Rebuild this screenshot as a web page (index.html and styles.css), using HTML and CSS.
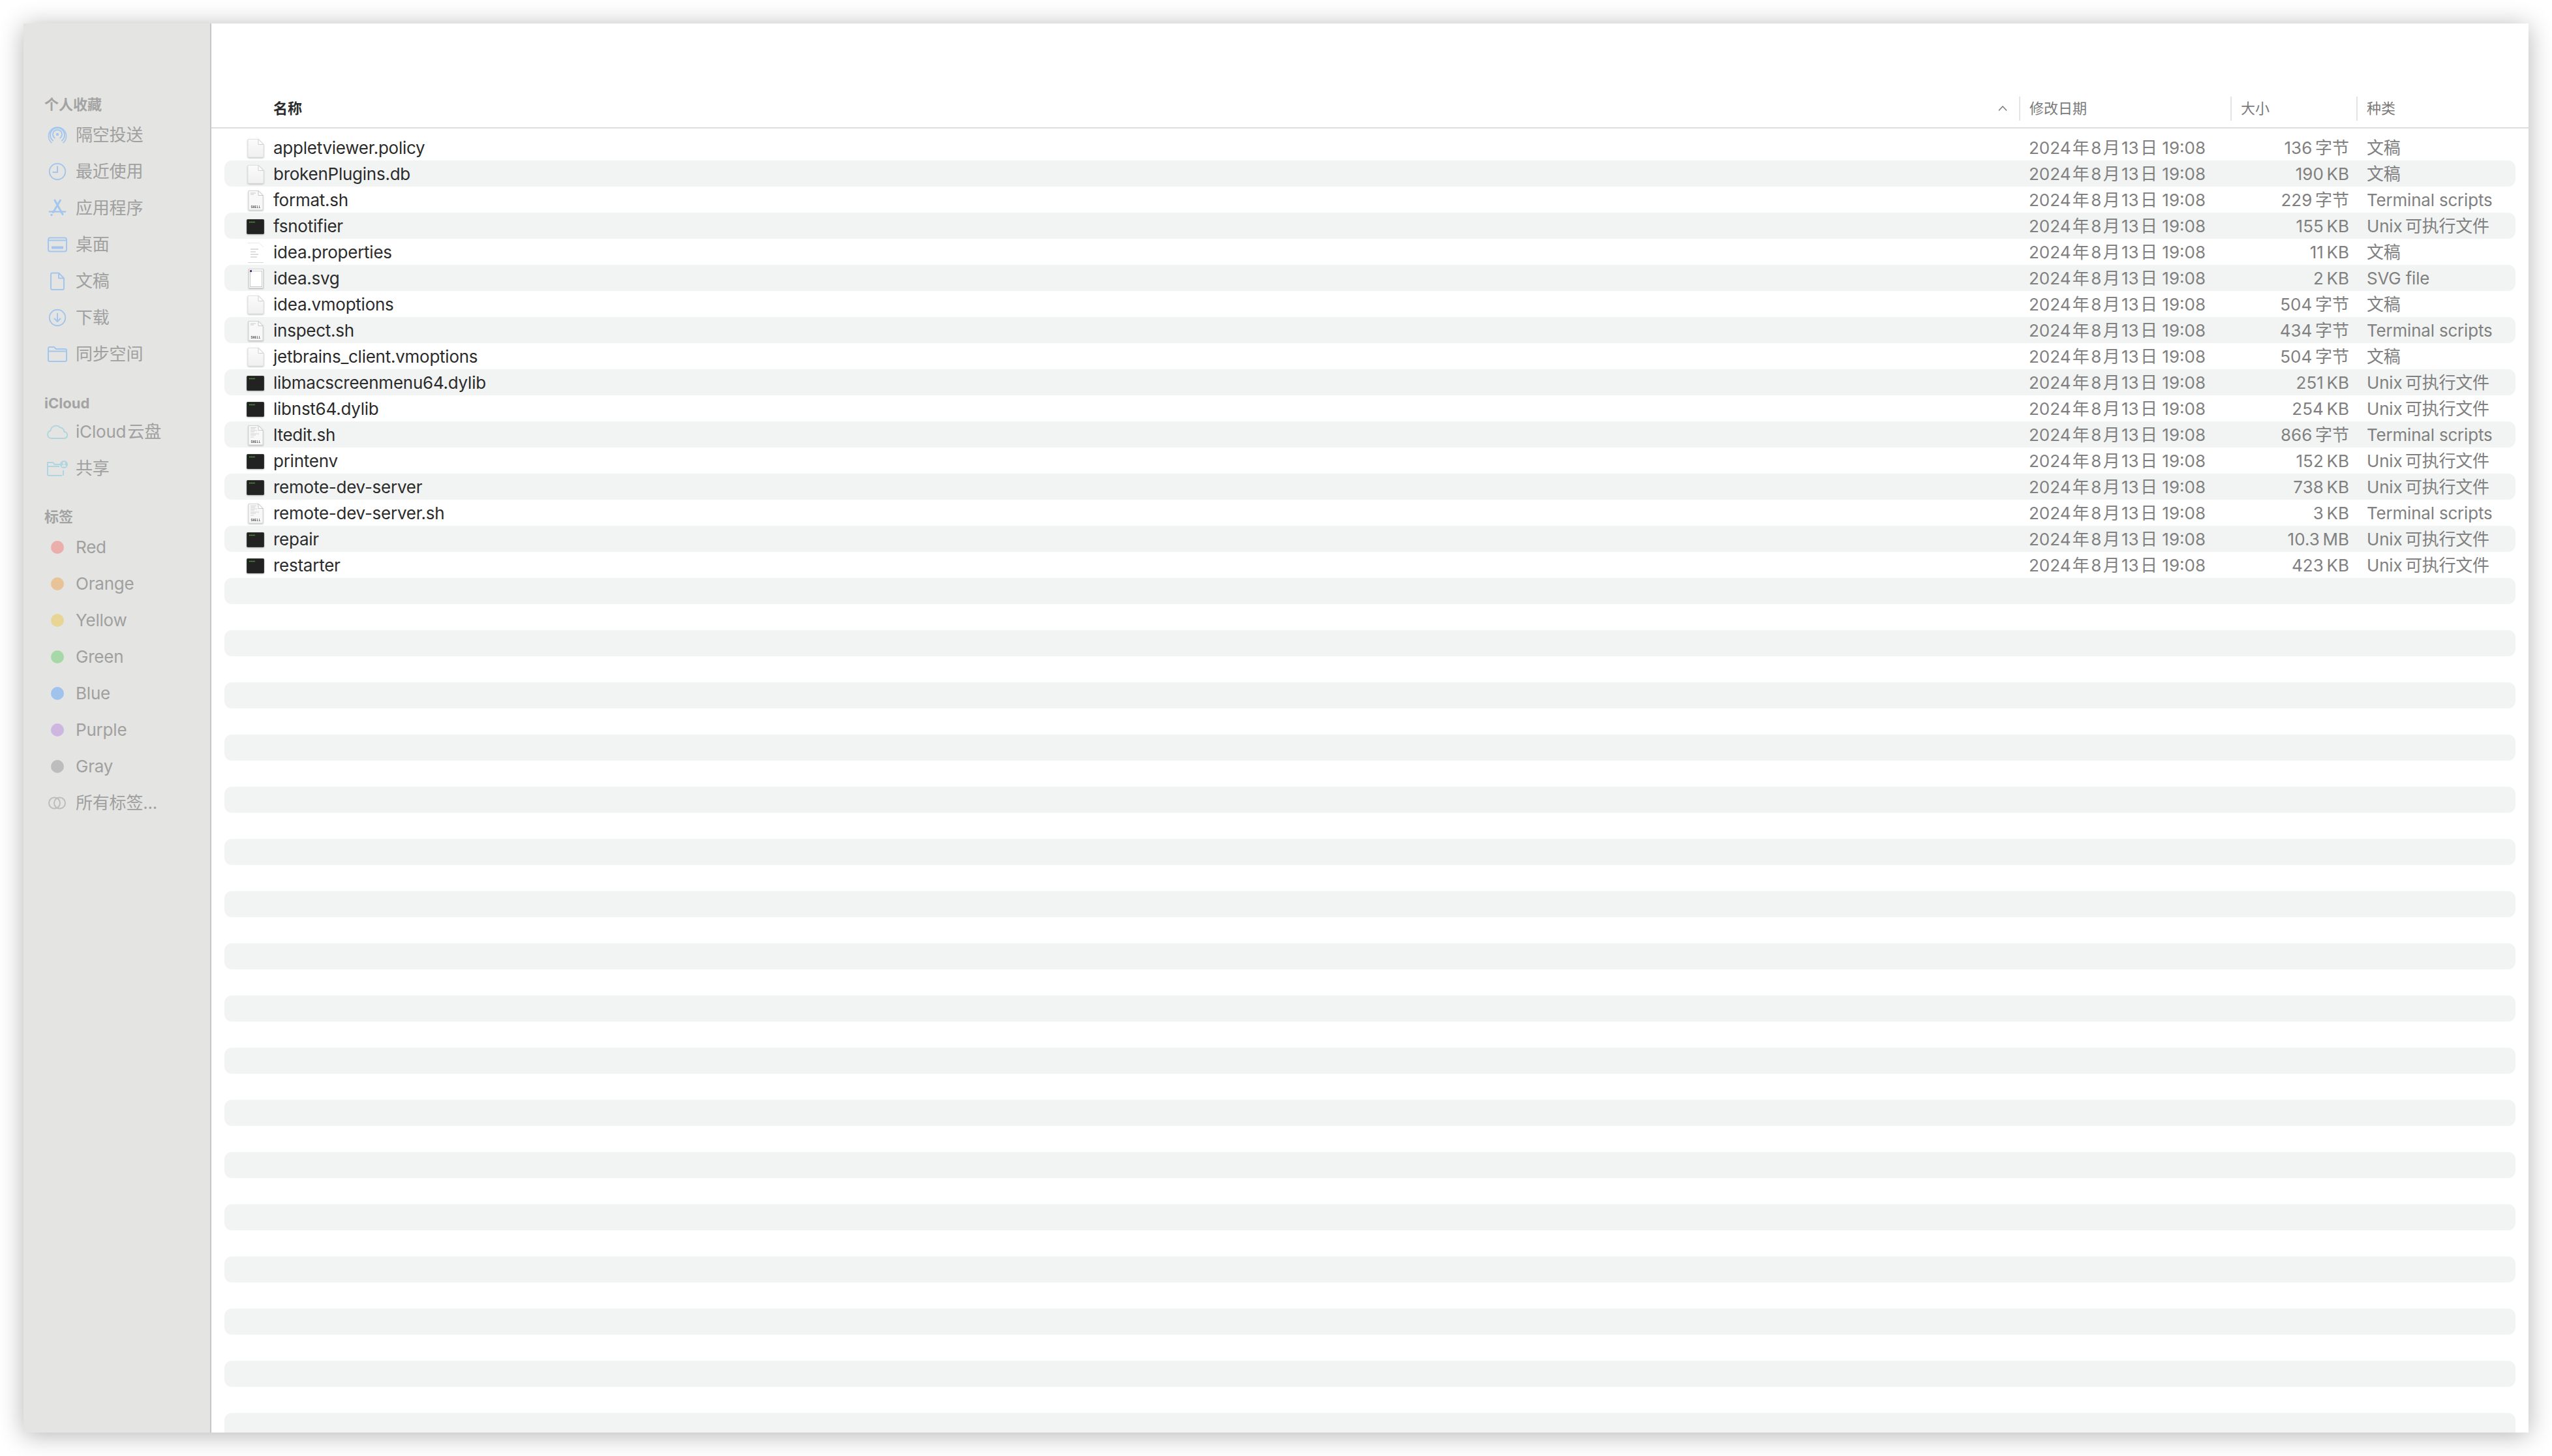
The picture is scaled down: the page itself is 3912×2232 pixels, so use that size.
FILE: index.html
```html
<!DOCTYPE html>
<html lang="en">
<head>
  <meta charset="UTF-8">
  <meta name="viewport" content="width=device-width, initial-scale=1.0">
  <title>Finder</title>
  <link rel="stylesheet" href="styles.css">
</head>
<body>
  <svg class="defs" width="0" height="0">
    <defs>
      <linearGradient id="pageFill" x1="0" y1="0" x2="0" y2="1">
        <stop offset="0" stop-color="#fbfbfb"/>
        <stop offset="1" stop-color="#f0f0f0"/>
      </linearGradient>
      <symbol id="fileDoc" viewBox="0 0 40 40">
        <path d="M8 6.500H24L32 14.500V33a1 1 0 0 1-1 1H9a1 1 0 0 1-1-1V7.500a1 1 0 0 1 1-1Z" fill="url(#pageFill)" stroke="#e2e2e2"/>
        <path d="M24 6.500V14.500H32Z" fill="#fff" stroke="#d0d0d0"/>
      </symbol>
      <symbol id="fileShell" viewBox="0 0 40 40">
        <path d="M9 5.500H24L31 12.500V35H9Z" fill="#f8f8f8" stroke="#d4d4d4"/>
        <path d="M24 5.500V12.500H31Z" fill="#fff" stroke="#c8c8c8"/>
        <path d="M12 9H20M12 11H17" stroke="#cccccc"/>
        <text x="20" y="32" class="shell-label">SHELL</text>
      </symbol>
      <symbol id="fileShellLong" viewBox="0 0 40 40">
        <path d="M9 5.500H24L31 12.500V35H9Z" fill="#f8f8f8" stroke="#d4d4d4"/>
        <path d="M24 5.500V12.500H31Z" fill="#fff" stroke="#c8c8c8"/>
        <path d="M12 8.500H21M12 10.500H19M12 13H22M12 15H18M12 18H25M12 20H20M12 23H17" stroke="#c8c8c8" stroke-width=".8"/>
        <text x="20" y="32" class="shell-label">SHELL</text>
      </symbol>
      <symbol id="fileTerm" viewBox="0 0 40 40">
        <rect x="6.500" y="9.500" width="26" height="22" rx="1" fill="#222" stroke="#3a3a3a"/>
        <path d="M10 13.500H19" stroke="#4fa63f" stroke-width="1.500" stroke-dasharray="2 .6"/>
      </symbol>
      <symbol id="fileText" viewBox="0 0 40 40">
        <path d="M8 5.500H25L32 12" fill="none" stroke="#e8e8e8"/>
        <path d="M8 35.500H32" stroke="#d8d8d8"/>
        <path d="M12 15H24M12 19H20M12 23H24M12 27H22" stroke="#bcbcbc" stroke-width="1.200"/>
      </symbol>
      <symbol id="fileSvg" viewBox="0 0 40 40">
        <rect x="9.500" y="5.500" width="22" height="29" fill="#fff" stroke="#d0d0d0"/>
        <rect x="11.500" y="8.500" width="18" height="24" fill="#fff" stroke="#c8c8c8"/>
        <rect x="11" y="7" width="3" height="3" fill="#27408f"/>
        <rect x="11" y="7" width="1.500" height="1.500" fill="#c8321f"/>
      </symbol>
    </defs>
  </svg>

  <div class="window">
    <aside class="sidebar">
      <div class="side-label">个人收藏</div>
      <div class="side-item">
        <svg class="side-icon" viewBox="0 0 34 34" fill="none" stroke="#a5c6ec" stroke-width="2" stroke-linecap="round">
          <circle cx="17" cy="16" r="2.200" fill="#a5c6ec" stroke="none"/>
          <path d="M12.800 21.500a7 7 0 1 1 8.400 0"/><path d="M10 25.500a11 11 0 1 1 14 0"/><path d="M8 28.800a13.600 13.600 0 1 1 18 0" stroke-width="1.600"/>
        </svg>
        <span>隔空投送</span>
      </div>
      <div class="side-item">
        <svg class="side-icon" viewBox="0 0 34 34" fill="none" stroke="#a5c6ec" stroke-width="2">
          <circle cx="17" cy="17" r="12.200"/><path d="M17 8.500V18H9.500"/>
        </svg>
        <span>最近使用</span>
      </div>
      <div class="side-item">
        <svg class="side-icon" viewBox="0 0 34 34" fill="none" stroke="#a5c6ec" stroke-width="3" stroke-linecap="round">
          <path d="M13 5L25 26.500M21.500 5L10.500 23.500"/><path d="M5 22.500H29" stroke-width="2.600"/><path d="M8 27.500h.1" stroke-width="3.400"/>
        </svg>
        <span>应用程序</span>
      </div>
      <div class="side-item">
        <svg class="side-icon" viewBox="0 0 34 34" fill="none" stroke="#a5c6ec" stroke-width="2">
          <rect x="3" y="6.500" width="28" height="21" rx="3"/><path d="M3 10.500H31"/><rect x="8" y="19.500" width="18" height="4" fill="#a5c6ec" stroke="none"/>
        </svg>
        <span>桌面</span>
      </div>
      <div class="side-item">
        <svg class="side-icon" viewBox="0 0 34 34" fill="none" stroke="#a5c6ec" stroke-width="2" stroke-linejoin="round">
          <path d="M9 4.500H19L27 12.500V28a2 2 0 0 1-2 2H9a2 2 0 0 1-2-2V6.500a2 2 0 0 1 2-2Z"/><path d="M19 4.500V12.500H27"/>
        </svg>
        <span>文稿</span>
      </div>
      <div class="side-item">
        <svg class="side-icon" viewBox="0 0 34 34" fill="none" stroke="#a5c6ec" stroke-width="2" stroke-linecap="round" stroke-linejoin="round">
          <circle cx="17" cy="17" r="12.200"/><path d="M17 10.500V22.500M12.500 18.500L17 23L21.500 18.500"/>
        </svg>
        <span>下载</span>
      </div>
      <div class="side-item">
        <svg class="side-icon" viewBox="0 0 34 34" fill="none" stroke="#a5c6ec" stroke-width="2" stroke-linejoin="round">
          <path d="M3 8a2 2 0 0 1 2-2h7l3 3h14a2 2 0 0 1 2 2v15a2 2 0 0 1-2 2H5a2 2 0 0 1-2-2Z"/><path d="M3 12.500H31"/>
        </svg>
        <span>同步空间</span>
      </div>

      <div class="side-label side-label-cloud">iCloud</div>
      <div class="side-item">
        <svg class="side-icon" viewBox="0 0 34 34" fill="none" stroke="#afd5e0" stroke-width="2" stroke-linejoin="round">
          <path d="M8 27a6 6 0 0 1-1.500-11.800a8.500 8.500 0 0 1 14.500-5a7 7 0 0 1 6.500 6.800a5 5 0 0 1-.5 10Z"/>
        </svg>
        <span>iCloud&hairsp;云盘</span>
      </div>
      <div class="side-item">
        <svg class="side-icon" viewBox="0 0 34 34" fill="none" stroke="#afd5e0" stroke-width="2" stroke-linejoin="round">
          <path d="M24 28H4a2 2 0 0 1-2-2V8h8l3 3h9M2 14H20M26 28V20"/>
          <circle cx="27" cy="11" r="6" fill="#afd5e0" stroke="none"/><circle cx="27" cy="9" r="2" fill="#e4e4e2" stroke="none"/><path d="M23.500 14.500a3.500 3 0 0 1 7 0Z" fill="#e4e4e2" stroke="none"/>
        </svg>
        <span>共享</span>
      </div>

      <div class="side-label side-label-tags">标签</div>
      <div class="side-item"><span class="side-icon"><i class="dot dot-red"></i></span><span>Red</span></div>
      <div class="side-item"><span class="side-icon"><i class="dot dot-orange"></i></span><span>Orange</span></div>
      <div class="side-item"><span class="side-icon"><i class="dot dot-yellow"></i></span><span>Yellow</span></div>
      <div class="side-item"><span class="side-icon"><i class="dot dot-green"></i></span><span>Green</span></div>
      <div class="side-item"><span class="side-icon"><i class="dot dot-blue"></i></span><span>Blue</span></div>
      <div class="side-item"><span class="side-icon"><i class="dot dot-purple"></i></span><span>Purple</span></div>
      <div class="side-item"><span class="side-icon"><i class="dot dot-gray"></i></span><span>Gray</span></div>
      <div class="side-item">
        <svg class="side-icon" viewBox="0 0 34 34" fill="none" stroke="#bdbdbd" stroke-width="2">
          <circle cx="12.500" cy="17" r="8.500"/><circle cx="20.500" cy="17" r="8.500"/>
        </svg>
        <span>所有标签...</span>
      </div>
    </aside>

    <main class="main">
      <div class="titlebar"></div>
      <div class="cols">
        <div class="col col-name">名称</div>
        <svg class="sort" viewBox="0 0 16 10" fill="none" stroke="#777" stroke-width="1.500"><path d="M2 8.500L8 2L14 8.500"/></svg>
        <div class="col col-date">修改日期</div>
        <div class="col col-size">大小</div>
        <div class="col col-kind">种类</div>
      </div>
      <div class="list">
        <div class="row"><svg class="ficon"><use href="#fileDoc"/></svg><span class="name">appletviewer.policy</span><span class="date">2024&hairsp;年&hairsp;8&hairsp;月&hairsp;13&hairsp;日 19:08</span><span class="size">136&thinsp;字节</span><span class="kind">文稿</span></div>
        <div class="row"><svg class="ficon"><use href="#fileDoc"/></svg><span class="name">brokenPlugins.db</span><span class="date">2024&hairsp;年&hairsp;8&hairsp;月&hairsp;13&hairsp;日 19:08</span><span class="size">190&thinsp;KB</span><span class="kind">文稿</span></div>
        <div class="row"><svg class="ficon"><use href="#fileShell"/></svg><span class="name">format.sh</span><span class="date">2024&hairsp;年&hairsp;8&hairsp;月&hairsp;13&hairsp;日 19:08</span><span class="size">229&thinsp;字节</span><span class="kind">Terminal scripts</span></div>
        <div class="row"><svg class="ficon"><use href="#fileTerm"/></svg><span class="name">fsnotifier</span><span class="date">2024&hairsp;年&hairsp;8&hairsp;月&hairsp;13&hairsp;日 19:08</span><span class="size">155&thinsp;KB</span><span class="kind">Unix&thinsp;可执行文件</span></div>
        <div class="row"><svg class="ficon ficon-flat"><use href="#fileText"/></svg><span class="name">idea.properties</span><span class="date">2024&hairsp;年&hairsp;8&hairsp;月&hairsp;13&hairsp;日 19:08</span><span class="size">11&thinsp;KB</span><span class="kind">文稿</span></div>
        <div class="row"><svg class="ficon"><use href="#fileSvg"/></svg><span class="name">idea.svg</span><span class="date">2024&hairsp;年&hairsp;8&hairsp;月&hairsp;13&hairsp;日 19:08</span><span class="size">2&thinsp;KB</span><span class="kind">SVG file</span></div>
        <div class="row"><svg class="ficon"><use href="#fileDoc"/></svg><span class="name">idea.vmoptions</span><span class="date">2024&hairsp;年&hairsp;8&hairsp;月&hairsp;13&hairsp;日 19:08</span><span class="size">504&thinsp;字节</span><span class="kind">文稿</span></div>
        <div class="row"><svg class="ficon"><use href="#fileShell"/></svg><span class="name">inspect.sh</span><span class="date">2024&hairsp;年&hairsp;8&hairsp;月&hairsp;13&hairsp;日 19:08</span><span class="size">434&thinsp;字节</span><span class="kind">Terminal scripts</span></div>
        <div class="row"><svg class="ficon"><use href="#fileDoc"/></svg><span class="name">jetbrains_client.vmoptions</span><span class="date">2024&hairsp;年&hairsp;8&hairsp;月&hairsp;13&hairsp;日 19:08</span><span class="size">504&thinsp;字节</span><span class="kind">文稿</span></div>
        <div class="row"><svg class="ficon"><use href="#fileTerm"/></svg><span class="name">libmacscreenmenu64.dylib</span><span class="date">2024&hairsp;年&hairsp;8&hairsp;月&hairsp;13&hairsp;日 19:08</span><span class="size">251&thinsp;KB</span><span class="kind">Unix&thinsp;可执行文件</span></div>
        <div class="row"><svg class="ficon"><use href="#fileTerm"/></svg><span class="name">libnst64.dylib</span><span class="date">2024&hairsp;年&hairsp;8&hairsp;月&hairsp;13&hairsp;日 19:08</span><span class="size">254&thinsp;KB</span><span class="kind">Unix&thinsp;可执行文件</span></div>
        <div class="row"><svg class="ficon"><use href="#fileShellLong"/></svg><span class="name">ltedit.sh</span><span class="date">2024&hairsp;年&hairsp;8&hairsp;月&hairsp;13&hairsp;日 19:08</span><span class="size">866&thinsp;字节</span><span class="kind">Terminal scripts</span></div>
        <div class="row"><svg class="ficon"><use href="#fileTerm"/></svg><span class="name">printenv</span><span class="date">2024&hairsp;年&hairsp;8&hairsp;月&hairsp;13&hairsp;日 19:08</span><span class="size">152&thinsp;KB</span><span class="kind">Unix&thinsp;可执行文件</span></div>
        <div class="row"><svg class="ficon"><use href="#fileTerm"/></svg><span class="name">remote-dev-server</span><span class="date">2024&hairsp;年&hairsp;8&hairsp;月&hairsp;13&hairsp;日 19:08</span><span class="size">738&thinsp;KB</span><span class="kind">Unix&thinsp;可执行文件</span></div>
        <div class="row"><svg class="ficon"><use href="#fileShellLong"/></svg><span class="name">remote-dev-server.sh</span><span class="date">2024&hairsp;年&hairsp;8&hairsp;月&hairsp;13&hairsp;日 19:08</span><span class="size">3&thinsp;KB</span><span class="kind">Terminal scripts</span></div>
        <div class="row"><svg class="ficon"><use href="#fileTerm"/></svg><span class="name">repair</span><span class="date">2024&hairsp;年&hairsp;8&hairsp;月&hairsp;13&hairsp;日 19:08</span><span class="size">10.3&thinsp;MB</span><span class="kind">Unix&thinsp;可执行文件</span></div>
        <div class="row"><svg class="ficon"><use href="#fileTerm"/></svg><span class="name">restarter</span><span class="date">2024&hairsp;年&hairsp;8&hairsp;月&hairsp;13&hairsp;日 19:08</span><span class="size">423&thinsp;KB</span><span class="kind">Unix&thinsp;可执行文件</span></div>
        <div class="row"></div><div class="row"></div><div class="row"></div><div class="row"></div>
        <div class="row"></div><div class="row"></div><div class="row"></div><div class="row"></div>
        <div class="row"></div><div class="row"></div><div class="row"></div><div class="row"></div>
        <div class="row"></div><div class="row"></div><div class="row"></div><div class="row"></div>
        <div class="row"></div><div class="row"></div><div class="row"></div><div class="row"></div>
        <div class="row"></div><div class="row"></div><div class="row"></div><div class="row"></div>
        <div class="row"></div><div class="row"></div><div class="row"></div><div class="row"></div>
        <div class="row"></div><div class="row"></div><div class="row"></div><div class="row"></div>
        <div class="row"></div>
      </div>
    </main>
  </div>
</body>
</html>
```

FILE: styles.css
```css
html, body {
  height: 100%;
}
body {
  margin: 0;
  padding: 36px;
  box-sizing: border-box;
  overflow: hidden;
  background: #fff;
  font-family: Inter, "Noto Sans CJK SC", sans-serif;
}
.defs {
  position: absolute;
}
.shell-label {
  font-family: "Liberation Mono", monospace;
  font-size: 5px;
  font-weight: 700;
  fill: #555;
  text-anchor: middle;
}
.window {
  display: flex;
  height: 2160px;
  overflow: hidden;
  background: #fff;
  box-shadow: 0 4px 36px rgba(0, 0, 0, 0.3);
}

/* sidebar */
.sidebar {
  width: 288px;
  flex: none;
  box-sizing: border-box;
  padding: 105px 0 0 32px;
  background: #e4e4e2;
  border-right: 2px solid #c6c6c4;
  color: #a0a0a0;
}
.side-label {
  height: 38px;
  line-height: 38px;
  font-size: 22px;
  font-weight: 700;
  color: #a3a3a3;
}
.side-label-cloud {
  margin-top: 28px;
  height: 35px;
}
.side-label-tags {
  margin-top: 27px;
}
.side-item {
  display: flex;
  align-items: center;
  gap: 11px;
  height: 56px;
  line-height: 56px;
  padding-left: 3px;
  font-size: 26px;
  letter-spacing: -0.2px;
}
.side-icon {
  display: flex;
  align-items: center;
  justify-content: center;
  width: 34px;
  height: 34px;
  flex: none;
}
.dot {
  width: 20px;
  height: 20px;
  border-radius: 50%;
}
.dot-red { background: #ecaeaa; }
.dot-orange { background: #e8c398; }
.dot-yellow { background: #e8d596; }
.dot-green { background: #a6d8a8; }
.dot-blue { background: #9fc3ec; }
.dot-purple { background: #cfb6e0; }
.dot-gray { background: #bdbdbd; }

/* file list */
.main {
  flex: 1;
  min-width: 0;
}
.titlebar {
  height: 103px;
}
.cols {
  display: flex;
  align-items: center;
  height: 58px;
  box-sizing: border-box;
  padding-bottom: 2px;
  border-bottom: 2px solid #dedede;
  font-size: 22px;
  color: #7a7a7a;
}
.col {
  box-sizing: border-box;
  height: 37px;
  line-height: 37px;
  padding-left: 14px;
  border-left: 2px solid #e4e4e4;
}
.col-name {
  flex: 1;
  padding-left: 95px;
  border-left: none;
  font-weight: 700;
  color: #2b2b2b;
}
.sort {
  width: 16px;
  height: 10px;
  margin-right: 17px;
}
.col-date {
  width: 324px;
}
.col-size {
  width: 193px;
}
.col-kind {
  width: 264px;
}
.list {
  padding-top: 9px;
}
.row {
  display: grid;
  grid-template-columns: 75px 2691px 310px 181px 1fr;
  align-items: center;
  height: 40px;
  line-height: 40px;
  margin: 0 20px;
  font-size: 26px;
  color: #808080;
  white-space: nowrap;
}
.row span {
  padding-top: 1px;
}
.row:nth-child(even) {
  background: #f2f4f3;
  border-radius: 11px;
}
.ficon {
  width: 40px;
  height: 40px;
  margin-left: 28px;
  filter: drop-shadow(0 1px 1px rgba(0, 0, 0, 0.25));
}
.ficon-flat {
  filter: none;
}
.name {
  color: #2b2b2b;
  letter-spacing: -0.25px;
}
.size {
  text-align: right;
}
.kind {
  padding-left: 27px;
  letter-spacing: -0.2px;
}
```
